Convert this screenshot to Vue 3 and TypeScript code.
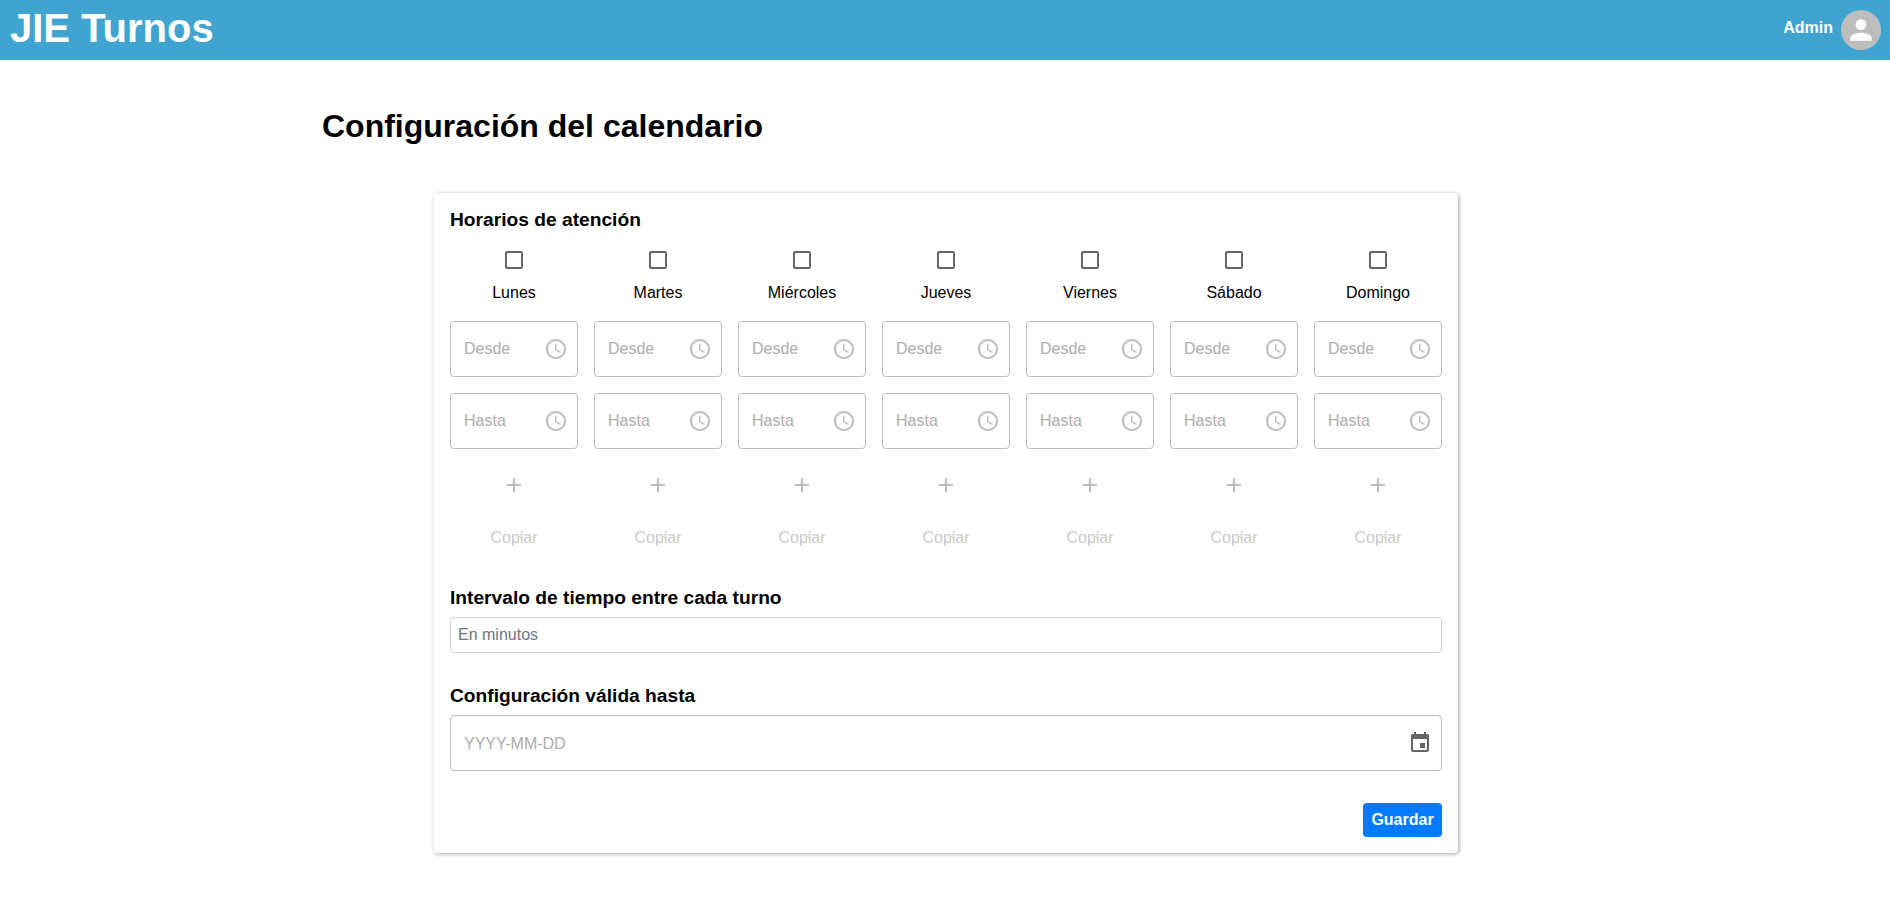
<script setup lang="ts">
const days: string[] = ['Lunes', 'Martes', 'Miércoles', 'Jueves', 'Viernes', 'Sábado', 'Domingo']
const clock = 'M11.99 2C6.47 2 2 6.48 2 12s4.47 10 9.99 10C17.52 22 22 17.52 22 12S17.52 2 11.99 2zM12 20c-4.42 0-8-3.58-8-8s3.58-8 8-8 8 3.58 8 8-3.58 8-8 8zM12.5 7H11v6l5.25 3.15.75-1.23-4.5-2.67z'
</script>

<template>
  <div class="page">
    <header class="topbar">
      <span class="brand">JIE Turnos</span>
      <div class="user">
        <span class="user-name">Admin</span>
        <span class="avatar">
          <svg viewBox="0 0 24 24" width="32" height="32"><path fill="#fff" d="M12 12c2.21 0 4-1.79 4-4s-1.79-4-4-4-4 1.79-4 4 1.79 4 4 4zm0 2c-2.67 0-8 1.34-8 4v2h16v-2c0-2.66-5.33-4-8-4z" /></svg>
        </span>
      </div>
    </header>

    <main class="content">
      <h1 class="title">Configuración del calendario</h1>
      <section class="card">
        <h2 class="heading">Horarios de atención</h2>
        <div class="days">
          <div v-for="day in days" :key="day" class="day">
            <svg class="check" viewBox="0 0 24 24" width="24" height="24"><path fill="#666" d="M19 5v14H5V5h14m0-2H5c-1.1 0-2 .9-2 2v14c0 1.1.9 2 2 2h14c1.1 0 2-.9 2-2V5c0-1.1-.9-2-2-2z" /></svg>
            <span class="day-name">{{ day }}</span>
            <div class="time first">
              <span>Desde</span>
              <svg viewBox="0 0 24 24" width="24" height="24"><path fill="#bdbdbd" :d="clock" /></svg>
            </div>
            <div class="time">
              <span>Hasta</span>
              <svg viewBox="0 0 24 24" width="24" height="24"><path fill="#bdbdbd" :d="clock" /></svg>
            </div>
            <svg class="plus" viewBox="0 0 24 24" width="24" height="24"><path fill="#bdbdbd" d="M19 13h-6v6h-2v-6H5v-2h6V5h2v6h6v2z" /></svg>
            <span class="copy">Copiar</span>
          </div>
        </div>

        <h2 class="heading interval-heading">Intervalo de tiempo entre cada turno</h2>
        <div class="small-input">En minutos</div>

        <h2 class="heading valid-heading">Configuración válida hasta</h2>
        <div class="date-input">
          <span>YYYY-MM-DD</span>
          <svg viewBox="0 0 24 24" width="24" height="24"><path fill="#666" d="M17 12h-5v5h5v-5zM16 1v2H8V1H6v2H5c-1.11 0-1.99.9-1.99 2L3 19c0 1.1.89 2 2 2h14c1.1 0 2-.9 2-2V5c0-1.1-.9-2-2-2h-1V1h-2zm3 18H5V8h14v11z" /></svg>
        </div>

        <div class="actions">
          <button class="save" type="button">Guardar</button>
        </div>
      </section>
    </main>
  </div>
</template>

<style>
html, body { margin: 0; background: #fff; }
</style>

<style scoped>
.page {
  font-family: "Liberation Sans", Arial, sans-serif;
  font-size: 16px;
  color: #000;
}
.topbar {
  height: 60px;
  background: #3fa5d0;
  display: flex;
  align-items: center;
  justify-content: space-between;
  padding: 0 9px 0 10px;
  box-sizing: border-box;
}
.brand { font-size: 40px; font-weight: 700; color: #fff; line-height: 56px; margin-bottom: 4px; }
.user { display: flex; align-items: center; gap: 8px; }
.user-name { font-size: 16px; font-weight: 700; color: #fff; margin-bottom: 5px; }
.avatar {
  width: 40px; height: 40px; border-radius: 50%;
  background: #bdbdbd;
  display: flex; align-items: center; justify-content: center;
}
.content { width: 1246px; margin: 0 auto; padding: 47px 0 53px; }
.title { margin: 0 0 48px; font-size: 32px; line-height: 38px; font-weight: 700; }
.card {
  width: 1024px;
  margin-left: 112px;
  box-sizing: border-box;
  padding: 16px;
  border-radius: 4px;
  background: #fff;
  box-shadow: 1px 1px 4px rgba(0,0,0,.35);
}
.heading { margin: 0; font-size: 19.2px; line-height: 22px; font-weight: 700; }
.days {
  display: grid;
  grid-template-columns: repeat(7, 128px);
  column-gap: 16px;
  margin-top: 17px;
}
.day { display: flex; flex-direction: column; align-items: center; }
.check { display: block; }
.day-name { margin-top: 8px; line-height: 24px; position: relative; top: 1px; }
.time {
  width: 100%;
  height: 56px;
  margin-top: 16px;
  box-sizing: border-box;
  border: 1px solid #bdbdbd;
  border-radius: 4px;
  display: flex;
  align-items: center;
  justify-content: space-between;
  padding: 0 9px 0 13px;
  color: #adadad;
}
.time.first { margin-top: 17px; }
.plus { display: block; margin-top: 24px; }
.copy { margin-top: 29px; line-height: 24px; color: #c9c9c9; }
.interval-heading { margin-top: 37px; }
.small-input {
  margin-top: 8px;
  height: 36px;
  box-sizing: border-box;
  border: 1px solid #ced4da;
  border-radius: 4px;
  padding: 0 7px;
  line-height: 34px;
  color: #6c757d;
}
.valid-heading { margin-top: 32px; }
.date-input {
  margin-top: 8px;
  height: 56px;
  box-sizing: border-box;
  border: 1px solid #bdbdbd;
  border-radius: 4px;
  display: flex;
  align-items: center;
  justify-content: space-between;
  padding: 0 9px 0 13px;
  color: #adadad;
}
.date-input span { position: relative; top: 1px; }
.actions { display: flex; justify-content: flex-end; margin-top: 32px; }
.save {
  width: 79px;
  height: 34px;
  border: 0;
  border-radius: 4px;
  background: #007bff;
  color: #fff;
  font: 700 16px "Liberation Sans", Arial, sans-serif;
  padding: 0;
}
</style>
